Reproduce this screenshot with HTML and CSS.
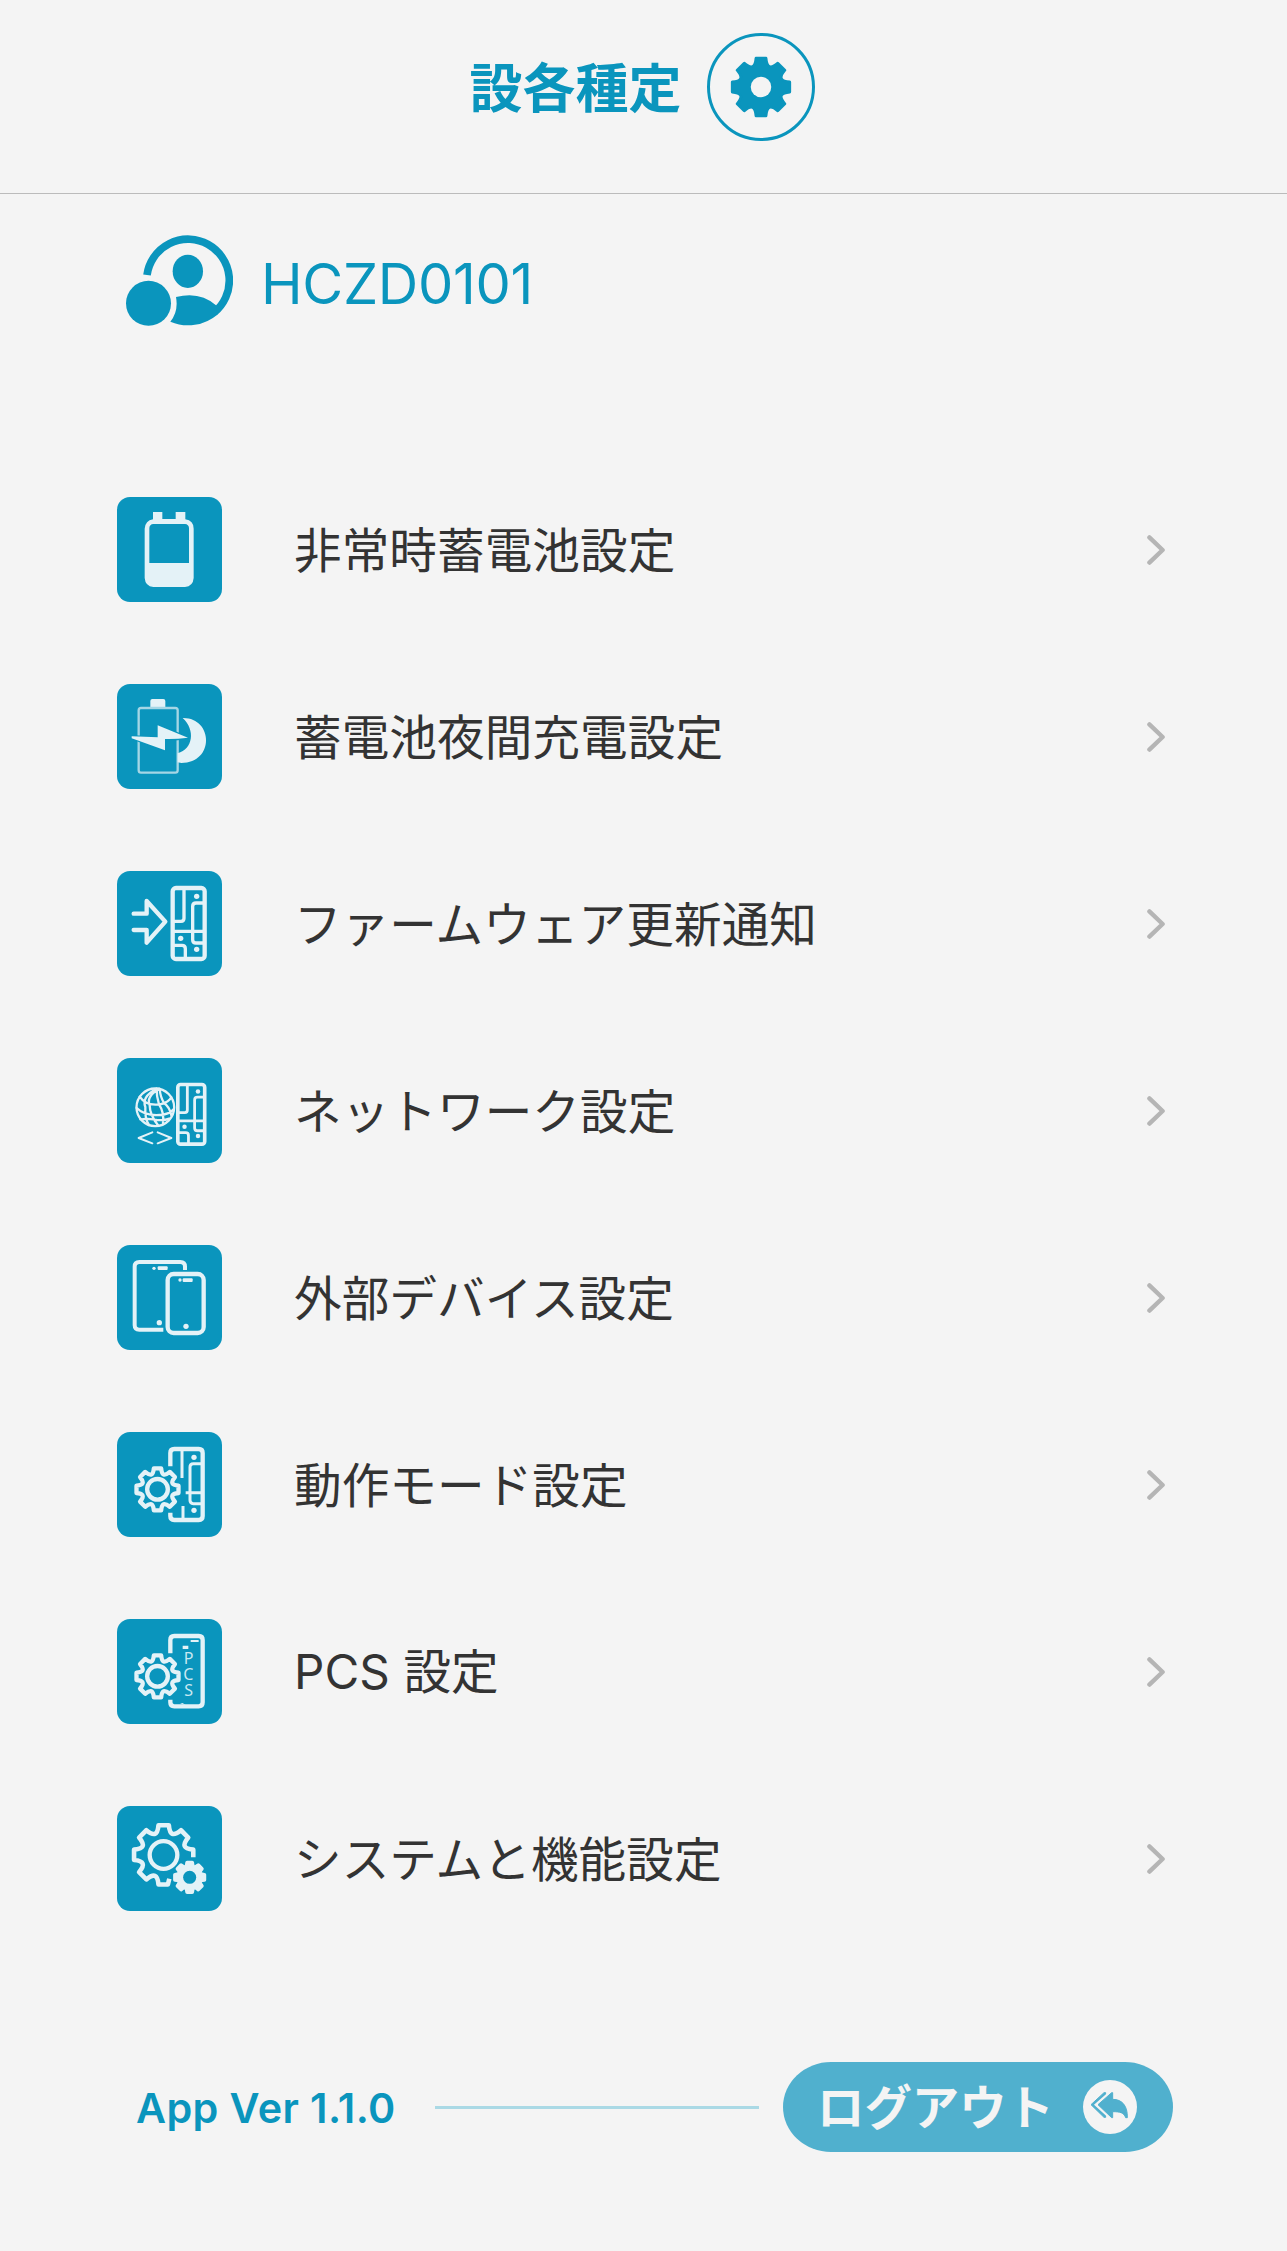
FILE: index.html
```html
<!DOCTYPE html>
<html lang="ja">
<head>
<meta charset="utf-8">
<title>設各種定</title>
<link rel="stylesheet" href="styles.css">
</head>
<body>
<svg class="defs" aria-hidden="true">
  <defs>
    <path id="cog" d="M-11,-63L11,-63C13,-42 20.5,-38.9 36.8,-52.3L52.3,-36.8C38.9,-20.5 42,-13 63,-11L63,11C42,13 38.9,20.5 52.3,36.8L36.8,52.3C20.5,38.9 13,42 11,63L-11,63C-13,42 -20.5,38.9 -36.8,52.3L-52.3,36.8C-38.9,20.5 -42,13 -63,11L-63,-11C-42,-13 -38.9,-20.5 -52.3,-36.8L-36.8,-52.3C-20.5,-38.9 -13,-42 -11,-63Z"/>
    <path id="chevron" d="M2.4,2.4L15.6,15L2.4,27.6"/>
    <g id="board">
      <rect x="219" y="99" width="96" height="213" rx="10" stroke-width="13"/>
      <path stroke-width="10" d="M253,104V190Q253,199 244,199H224M310,144H289Q279,144 279,154V254Q279,264 289,264H310M224,229H310M224,271H247Q257,271 257,281V308"/>
      <g class="solid"><circle cx="291" cy="124" r="8"/><circle cx="243" cy="250" r="8"/><circle cx="291" cy="283" r="8"/></g>
    </g>
  </defs>
</svg>
<header class="header">
  <h1 class="title">設各種定</h1>
  <svg class="header-icon" viewBox="801 69 324 324">
    <circle cx="963" cy="231" r="157.5" fill="none" stroke="currentColor" stroke-width="9"/>
    <g transform="translate(963 231) scale(1.37)">
      <use href="#cog" fill="currentColor" stroke="currentColor" stroke-width="6" stroke-linejoin="round"/>
      <circle class="hole" r="22.5"/>
    </g>
  </svg>
</header>
<main class="main">
  <section class="user">
    <svg class="user-icon" viewBox="78 75 321 273">
      <path d="M141,195A124 124 0 1 1 343,307" fill="none" stroke="currentColor" stroke-width="23"/>
      <ellipse cx="263.500" cy="184" rx="45.500" ry="50"/>
      <path d="M228,261Q300,243 348,286L352,314A136 136 0 0 1 211,335Q236,304 228,261Z"/>
      <circle cx="145.500" cy="280" r="67.500"/>
    </svg>
    <span class="user-name">HCZD0101</span>
  </section>
  <ul class="menu">
    <li class="item">
      <svg class="tile" viewBox="52 51 315 315">
        <path class="solid" fill-rule="evenodd" d="M160,96H188V117H228V96H257V118Q282,122 282,146V294Q280,319 256,321H161Q137,319 135,294V146Q137,122 160,118ZM149,249H268V144Q267,133 256,132H161Q150,133 149,144Z"/>
      </svg>
      <span class="label">非常時蓄電池設定</span>
      <svg class="arrow" viewBox="0 0 18 30"><use href="#chevron"/></svg>
    </li>
    <li class="item">
      <svg class="tile" viewBox="52 42 315 315">
        <path class="solid" d="M152,111V93Q152,87 158,87H191Q197,87 197,93V111Z"/>
        <rect class="faint" x="117" y="114" width="117" height="194" rx="7" stroke-width="7"/>
        <path class="gap" d="M96,199L174,202V166L265,203L234,207L196,210V241L115,211L96,205Z"/>
        <path class="solid" d="M249,144C340,142 347,278 245,279L234,277V250C280,237 288,180 249,144Z"/>
        <path class="solid" d="M96,199L174,202V166L265,203Q230,208 196,207V241L96,205Z"/>
      </svg>
      <span class="label">蓄電池夜間充電設定</span>
      <svg class="arrow" viewBox="0 0 18 30"><use href="#chevron"/></svg>
    </li>
    <li class="item">
      <svg class="tile" viewBox="52 48 315 315">
        <path stroke-width="13" d="M102,176H141V138L197,200L141,263V225H102"/>
        <use href="#board"/>
      </svg>
      <span class="label">ファームウェア更新通知</span>
      <svg class="arrow" viewBox="0 0 18 30"><use href="#chevron"/></svg>
    </li>
    <li class="item">
      <svg class="tile" viewBox="52 48 315 315">
        <g stroke-width="7">
          <circle cx="167" cy="196" r="56.500"/>
          <path d="M120,164Q140,194 185,186Q207,180 215,166M111,198Q135,222 180,219Q207,218 222,202M122,232Q145,229 161,232Q190,238 209,230M171,140Q125,164 137,195Q135,232 148,249M178,140Q139,163 150,190Q150,218 175,250M171,140Q170,163 178,187Q194,210 190,245M180,141Q182,165 193,183Q210,195 215,220"/>
          <path stroke-width="6" d="M158,271L117,288L158,304M174,271L215,288L174,304"/>
        </g>
        <g transform="translate(50.500 44.500) scale(.84)"><use href="#board"/></g>
      </svg>
      <span class="label">ネットワーク設定</span>
      <svg class="arrow" viewBox="0 0 18 30"><use href="#chevron"/></svg>
    </li>
    <li class="item">
      <svg class="tile" viewBox="52 45 315 315">
        <path class="butt" stroke-width="12" d="M191,299H119Q105,299 105,285V110Q105,96 119,96H242Q256,96 256,110V120"/>
        <rect x="204" y="132" width="108" height="177" rx="18" stroke-width="13"/>
        <g class="solid"><circle cx="163" cy="115" r="5"/><rect x="174" y="109" width="30" height="11" rx="3"/><circle cx="179" cy="278" r="8"/><circle cx="241" cy="150" r="5"/><rect x="249" y="145" width="30" height="11" rx="3"/><circle cx="259" cy="289" r="8"/></g>
      </svg>
      <span class="label">外部デバイス設定</span>
      <svg class="arrow" viewBox="0 0 18 30"><use href="#chevron"/></svg>
    </li>
    <li class="item">
      <svg class="tile" viewBox="52 45 315 315">
        <path class="butt" stroke-width="13" d="M212,148V108Q212,96 224,96H297Q309,96 309,108V297Q309,309 297,309H224Q212,309 212,297V287"/>
        <path stroke-width="9" class="butt" d="M247,100V183M304,140H281Q271,140 271,150V250Q271,260 281,260H304M258,227H304M250,267V304"/>
        <g class="solid"><circle cx="283" cy="121" r="8"/><circle cx="283" cy="280" r="8"/></g>
        <g transform="translate(173.500 217)" stroke-width="13"><use href="#cog"/><circle r="31"/></g>
      </svg>
      <span class="label">動作モード設定</span>
      <svg class="arrow" viewBox="0 0 18 30"><use href="#chevron"/></svg>
    </li>
    <li class="item">
      <svg class="tile" viewBox="52 45 315 315">
        <path class="butt" stroke-width="13" d="M212,148V108Q212,96 224,96H297Q309,96 309,108V295Q309,307 297,307H224Q212,307 212,295V287"/>
        <path class="solid" d="M273,108H297V114H273ZM249,125H266V135H249ZM241,300L248,297L258,302Z"/>
        <g class="pcs" text-anchor="middle"><text x="267" y="179">P</text><text x="266" y="229">C</text><text x="267" y="277">S</text></g>
        <g transform="translate(173.500 217)" stroke-width="13"><use href="#cog"/><circle r="31"/></g>
      </svg>
      <span class="label latin">PCS 設定</span>
      <svg class="arrow" viewBox="0 0 18 30"><use href="#chevron"/></svg>
    </li>
    <li class="item">
      <svg class="tile" viewBox="52 48 315 315">
        <path class="butt" transform="translate(192 194.500) scale(1.41)" stroke-width="9.800" d="M63,5L63,-11C42,-13 38.900,-20.500 52.300,-36.800L36.800,-52.300C20.500,-38.900 13,-42 11,-63L-11,-63C-13,-42 -20.500,-38.900 -36.800,-52.300L-52.300,-36.800C-38.900,-20.500 -42,-13 -63,-11L-63,11C-42,13 -38.900,20.500 -52.300,36.800L-36.800,52.300C-20.500,38.900 -13,42 -11,63L9,63L12,51"/>
        <circle cx="191.500" cy="195" r="41.500" stroke-width="13"/>
        <g transform="translate(270 262) scale(.7)"><use class="solid" href="#cog"/><use href="#cog" stroke-width="16"/><circle class="gap" r="28"/></g>
      </svg>
      <span class="label">システムと機能設定</span>
      <svg class="arrow" viewBox="0 0 18 30"><use href="#chevron"/></svg>
    </li>
  </ul>
</main>
<footer class="footer">
  <span class="version">App Ver 1.1.0</span>
  <span class="rule"></span>
  <button class="logout" type="button">
    <span class="logout-text">ログアウト</span>
    <svg class="logout-icon" viewBox="968 120 162 162">
      <circle cx="1049" cy="201" r="81" fill="#f4f4f4"/>
      <path class="reply" d="M1031,158L992,194L1031,232L1036,232V158Z"/>
      <path class="reply-edge" d="M1057,153L1010,194L1057,237"/>
      <path class="reply" d="M1054,158H1057V178C1086,178 1102,198 1101,233H1096C1091,218 1080,215 1057,215V233H1054L1013,194Z"/>
    </svg>
  </button>
</footer>
</body>
</html>
```
FILE: styles.css
```css
* { box-sizing: border-box; }

body {
  margin: 0;
  min-height: 2251px;
  background: #f4f4f4;
  color: #333;
  font-family: Inter, "Noto Sans CJK JP", sans-serif;
}

.defs { display: block; width: 0; height: 0; }

.header {
  display: flex;
  justify-content: center;
  gap: 25px;
  height: 194px;
  padding: 33px 3px 0 0;
  border-bottom: 1px solid #bbb;
  color: #0a95bd;
}
.title {
  margin: 0;
  font: 700 53px/104px "Noto Sans CJK JP", sans-serif;
}
.header-icon { width: 108px; height: 108px; }
.hole { fill: #f4f4f4; }

.main { padding: 41px 122px 0 117px; }

.user {
  display: flex;
  gap: 28px;
  height: 91px;
  padding-left: 9px;
  color: #0a95bd;
}
.user-icon { width: 107px; height: 91px; fill: currentColor; }
.user-name { font-size: 56px; line-height: 99px; letter-spacing: -0.3px; }

.menu {
  display: grid;
  gap: 82px;
  margin: 171px 0 0;
  padding: 0;
  list-style: none;
}
.item { display: flex; align-items: center; height: 105px; }
.tile {
  width: 105px;
  height: 105px;
  border-radius: 13px;
  background: #0a95bd;
  fill: none;
  stroke: #e4f2f7;
  stroke-linecap: round;
  stroke-linejoin: round;
}
.solid { fill: #e4f2f7; stroke: none; }
.faint { stroke: #a5d6e5; }
.butt { stroke-linecap: butt; }
.gap { fill: #0a95bd; stroke: #0a95bd; stroke-width: 7px; }
circle.gap { stroke: none; }
.pcs { fill: #c9e8f1; stroke: none; font: 48px "Noto Sans", sans-serif; }
.label {
  flex: 1;
  padding: 0 0 4px 72px;
  font: 400 47.6px/101px "Noto Sans CJK JP", sans-serif;
  letter-spacing: 0.08px;
}
.latin {
  padding-bottom: 0;
  font-family: Inter, "Noto Sans CJK JP", sans-serif;
}
.arrow {
  width: 18px;
  height: 30px;
  fill: none;
  stroke: #b5b5b5;
  stroke-width: 4.4px;
  stroke-linecap: round;
  stroke-linejoin: round;
}

.footer {
  display: flex;
  align-items: center;
  height: 90px;
  margin: 151px 114px 0 136px;
  color: #0a95bd;
}
.version {
  width: 299px;
  padding-top: 1px;
  font-size: 41.3px;
  font-weight: 600;
  letter-spacing: 0.4px;
}
.rule { flex: 1; height: 3px; margin-right: 24px; background: #aad9e5; }
.logout {
  display: flex;
  align-items: center;
  justify-content: space-between;
  width: 390px;
  height: 90px;
  padding: 0 36px 0 34px;
  border: 0;
  border-radius: 48px / 45px;
  background: #50b0ce;
  color: #f4f4f4;
  font: 700 47.4px/86px "Noto Sans CJK JP", sans-serif;
}
.logout-text { padding-bottom: 4px; }
.logout-icon { width: 54px; height: 54px; }
.reply { fill: #50b0ce; stroke: #50b0ce; stroke-width: 3px; stroke-linejoin: round; }
.reply-edge { fill: none; stroke: #f4f4f4; stroke-width: 12px; }
```
